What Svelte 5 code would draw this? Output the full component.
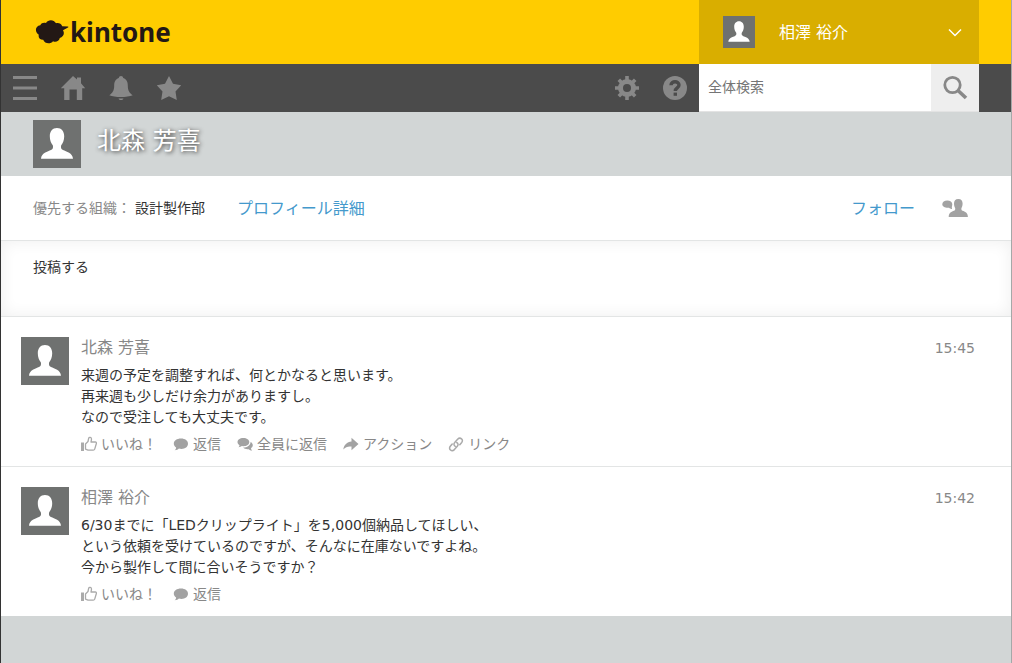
<script>
    let search = "";
    let message = "";

    const posts = [
        {
            name: "北森 芳喜",
            time: "15:45",
            lines: [
                "来週の予定を調整すれば、何とかなると思います。",
                "再来週も少しだけ余力がありますし。",
                "なので受注しても大丈夫です。",
            ],
            actions: ["like", "reply", "replyAll", "action", "link"],
        },
        {
            name: "相澤 裕介",
            time: "15:42",
            lines: [
                "6/30までに「LEDクリップライト」を5,000個納品してほしい、",
                "という依頼を受けているのですが、そんなに在庫ないですよね。",
                "今から製作して間に合いそうですか？",
            ],
            actions: ["like", "reply"],
        },
    ];

    const labels = {
        like: "いいね！",
        reply: "返信",
        replyAll: "全員に返信",
        action: "アクション",
        link: "リンク",
    };
</script>

{#snippet avatar(size)}
    <svg class="avatar {size}" viewBox="0 0 48 48" aria-hidden="true">
        <rect width="48" height="48" fill="#6f7170" />
        <path
            d="M24 8c4.500 0 7.200 3.500 7.200 8.200 0 3.800-1.300 6.900-3 9.100-.6 2.400-.1 3.700 1.800 4.700 3.200 1.600 9.800 3 10 8.700H8c.2-5.700 6.800-7.100 10-8.700 1.900-1 2.400-2.300 1.800-4.700-1.700-2.200-3-5.300-3-9.100C16.800 11.500 19.500 8 24 8z"
            fill="#fff"
        />
    </svg>
{/snippet}

{#snippet actionIcon(type)}
    <svg class="action-icon" viewBox="0 0 16 16" aria-hidden="true">
        {#if type === "like"}
            <path d="M0 6.500h3V15H0z" fill="#aaa" />
            <path
                d="M4.500 8 7 5.500 7.700 2.200c.4-1.400 2.800-1 2.800.9L10 6h4.300c1 0 1.300.9 1 1.700l-1.600 5.400c-.2.700-.8 1-1.500 1H7l-2.500-1z"
                fill="none"
                stroke="#aaa"
                stroke-width="1.300"
                stroke-linejoin="round"
            />
        {:else if type === "reply"}
            <path
                d="M8 2.500c4.200 0 7 2.200 7 5.200s-2.800 5.200-6.500 5.200c-1 0-1.800-.1-2.600-.3-.9.900-2.300 1.600-4.200 1.700.9-.8 1.400-1.700 1.400-2.900C1.700 10.500.8 9.200.8 7.700c0-3 3-5.200 7.200-5.200z"
                fill="#a2a2a2"
            />
        {:else if type === "replyAll"}
            <path
                d="M6.300 2c3.500 0 6 1.700 6 4.100s-2.500 4.200-5.700 4.200l-1.900-.2c-.7.700-1.800 1.100-3.300 1.200.7-.6 1-1.200 1.100-2.100C1.200 8.400.5 7.400.5 6.100.5 3.700 2.800 2 6.300 2z"
                fill="#a2a2a2"
            />
            <path
                d="M13.600 6c1.400.7 2.200 1.900 2.200 3.300 0 1.200-.7 2.200-1.800 3 0 .9.400 1.600 1.200 2.200-1.500 0-2.700-.5-3.500-1.300-2.400.3-4.500-.3-5.500-1.600 4-.2 7.200-2 7.400-5.600z"
                fill="#a2a2a2"
            />
        {:else if type === "action"}
            <path
                d="M8.500 1.800 15.500 8l-7 6.200v-3.600c-3.300-.5-6 .4-8.200 2.900C1 8.800 4 6 8.500 5.500z"
                fill="#a2a2a2"
            />
        {:else}
            <g fill="none" stroke="#aaa" stroke-width="1.500" stroke-linecap="round">
                <path d="M7.300 10.300c-1.500-.8-1.800-2.500-.6-3.800l2.900-3.300c2.700-2.600 6.400.5 4.100 3.300l-1.900 2.200" />
                <path d="M8.700 6.500c1.500.8 1.800 2.500.6 3.800l-2.900 3.300c-2.700 2.600-6.400-.5-4.100-3.300l1.900-2.200" />
            </g>
        {/if}
    </svg>
{/snippet}

<div class="page">
    <header class="header">
        <a class="logo" href="#top">
            <svg width="34" height="26" viewBox="0 0 34 26" aria-hidden="true">
                <path
                    d="M5.300 6.200C6.500 3.600 9 3.300 11 4c2-3.500 7.500-4 10 .2 2.800-.7 5.300.6 6.200 3l5.800.3c.5.300.5.800 0 1l-5 2.700c2 3.300.3 7-3.200 7.800-.8 3.300-4 4.600-6.800 3.300-2.300 3-8.300 2.800-9.800-1.500-3.200.2-5.200-2.300-4.400-5C-.3 13.300-.2 7 5.300 6.200z"
                    fill="#231815"
                />
            </svg>
            <span>kintone</span>
        </a>
        <button class="user" type="button">
            {@render avatar("small")}
            <span class="user-name">相澤 裕介</span>
            <svg width="14" height="9" viewBox="0 0 14 9" aria-hidden="true">
                <path d="M1 1.500 7 7.500l6-6" fill="none" stroke="#fff" stroke-width="1.500" />
            </svg>
        </button>
    </header>

    <nav class="toolbar">
        <div class="tools">
            <button type="button" aria-label="メニュー">
                <svg viewBox="0 0 26 26"><path d="M1 2.500h24M1 13h24M1 23.500h24" stroke="#888" stroke-width="3" /></svg>
            </button>
            <button type="button" aria-label="ポータル">
                <svg viewBox="0 0 26 26">
                    <path d="M13 1l4 3.600V2.500h4v5.800l4.200 4.900h-3V25h-5.400V14.500H9.500V25H4.200V13.200h-3.400z" fill="#888" />
                </svg>
            </button>
            <button type="button" aria-label="通知">
                <svg viewBox="0 0 26 26">
                    <path
                        d="M10.800 3c0-2.700 4.400-2.700 4.400 0 3.500 1.200 4.600 4 4.600 7.500 0 5.500 1.900 7.500 4.900 9.800-5.500 2.400-18 2.400-23.400 0 3-2.300 4.900-4.300 4.900-9.800 0-3.500 1.100-6.300 4.600-7.500zM10.500 23.400h5c-.8 2-4.200 2-5 0z"
                        fill="#888"
                    />
                </svg>
            </button>
            <button type="button" aria-label="ブックマーク">
                <svg viewBox="0 0 26 26">
                    <path d="M13 1l4 7.800 8.200 1.400-5.700 6.200 1.300 8.600L13 21.200 5.200 25l1.300-8.600L.8 10.200 9 8.800z" fill="#888" />
                </svg>
            </button>
        </div>
        <div class="tools">
            <button type="button" aria-label="設定">
                <svg viewBox="0 0 26 26">
                    <g stroke="#888" stroke-width="3.600">
                        <path d="M13 1v24M1 13h24M4.800 4.800l16.400 16.400M21.200 4.800 4.800 21.200" />
                    </g>
                    <circle cx="13" cy="13" r="9" fill="#888" />
                    <circle cx="13" cy="13" r="4" fill="#4b4b4b" />
                </svg>
            </button>
            <button type="button" aria-label="ヘルプ">
                <svg viewBox="0 0 26 26">
                    <circle cx="13" cy="13" r="12" fill="#888" />
                    <path
                        d="M9 10.200C9 5.600 17 5.600 17 10c0 3-3.700 2.900-3.700 6"
                        fill="none"
                        stroke="#4b4b4b"
                        stroke-width="3.400"
                    />
                    <path d="M11.600 17.600h3.400v3.200h-3.400z" fill="#4b4b4b" />
                </svg>
            </button>
        </div>
        <form class="search" on:submit|preventDefault>
            <input type="text" bind:value={search} placeholder="全体検索" aria-label="全体検索" />
            <button type="submit" aria-label="検索">
                <svg viewBox="0 0 26 26">
                    <circle cx="10.500" cy="10" r="7.700" fill="none" stroke="#888" stroke-width="2.800" />
                    <path d="M16 15.500l8 7.500" stroke="#888" stroke-width="3.600" />
                </svg>
            </button>
        </form>
    </nav>

    <div class="cover">
        {@render avatar("large")}
        <h1>北森 芳喜</h1>
    </div>

    <div class="profile">
        <span class="org-label">優先する組織：</span>
        <span class="org">設計製作部</span>
        <a href="#profile">プロフィール詳細</a>
        <a class="follow" href="#follow">フォロー</a>
        <button class="mention" type="button" aria-label="メンション">
            <svg width="26" height="20" viewBox="0 0 26 20">
                <path
                    d="M5.300 2.500c2.900 0 5 1.500 5 3.700 0 1.500-.8 2.600-.3 4.800-1.300-.1-2.300-.7-3-1.300C3 10 .3 8.500.3 6.200c0-2.200 2.100-3.700 5-3.700z"
                    fill="#a2a2a2"
                />
                <path
                    d="M16.300 1c3 0 4.300 1.800 4.300 4.500 0 2-.6 3.500-1.200 4.700-.2 1.400.2 2.100 1.200 2.500 2.200.9 5.300 1.800 5.300 6.300H6.700c0-4.500 3.100-5.400 5.300-6.300 1-.4 1.400-1.100 1.200-2.500-.6-1.200-1.200-2.700-1.200-4.700C12 2.800 13.300 1 16.300 1z"
                    fill="#a2a2a2"
                />
            </svg>
        </button>
    </div>

    <div class="compose">
        <textarea bind:value={message} placeholder="投稿する" aria-label="投稿する"></textarea>
    </div>

    <main>
        {#each posts as post}
            <article class="post">
                {@render avatar("large")}
                <div class="post-content">
                    <div class="post-head">
                        <a href="#user">{post.name}</a>
                        <time>{post.time}</time>
                    </div>
                    <div class="post-body">
                        {#each post.lines as line}
                            <p>{line}</p>
                        {/each}
                    </div>
                    <div class="actions">
                        {#each post.actions as type}
                            <button type="button">
                                {@render actionIcon(type)}
                                <span>{labels[type]}</span>
                            </button>
                        {/each}
                    </div>
                </div>
            </article>
        {/each}
    </main>
</div>

<style>
    :global(body) {
        background: #d2d6d6;
    }
    .page {
        min-height: 100vh;
        box-sizing: border-box;
        border-left: 1px solid #333;
        border-right: 1px solid #a5a8a8;
        background: #d2d6d6;
        color: #333;
        font-family: "DejaVu Sans", "Noto Sans CJK JP", sans-serif;
        font-size: 14px;
        line-height: 21px;
    }
    button,
    input,
    textarea {
        font: inherit;
        color: inherit;
        border: none;
        padding: 0;
        margin: 0;
        background: none;
        border-radius: 0;
    }
    button {
        cursor: pointer;
    }
    a {
        color: #4499cc;
        text-decoration: none;
    }
    svg {
        display: block;
        flex: none;
    }
    .avatar.large {
        width: 48px;
        height: 48px;
    }
    .avatar.small {
        width: 32px;
        height: 32px;
    }
    .header {
        display: flex;
        justify-content: space-between;
        height: 64px;
        padding-right: 32px;
        background: #ffcc00;
    }
    .logo {
        display: flex;
        align-items: center;
        gap: 1px;
        padding-left: 34px;
        color: #231815;
        font-family: "Noto Sans", sans-serif;
        font-size: 26px;
        font-weight: 700;
    }
    .user {
        display: flex;
        align-items: center;
        width: 280px;
        padding: 0 17px 0 24px;
        background: #d9ae00;
        color: #fff;
        font-size: 16px;
    }
    .user-name {
        flex: 1;
        margin-left: 24px;
        text-align: left;
    }
    .toolbar {
        display: flex;
        height: 48px;
        padding-right: 32px;
        background: #4b4b4b;
    }
    .tools {
        display: flex;
    }
    .tools:first-child {
        flex: 1;
    }
    .tools button,
    .search button {
        display: flex;
        align-items: center;
        justify-content: center;
        width: 48px;
    }
    .tools svg,
    .search svg {
        width: 26px;
        height: 26px;
    }
    .search {
        display: flex;
        width: 280px;
        box-sizing: border-box;
        border-bottom: 1px solid #e3e3e3;
        background: #fff;
    }
    .search input {
        flex: 1;
        min-width: 0;
        padding: 0 9px;
    }
    .search input::placeholder {
        color: #757575;
    }
    .search button {
        background: #eee;
    }
    .cover {
        display: flex;
        align-items: center;
        gap: 16px;
        height: 64px;
        padding: 0 32px;
    }
    h1 {
        margin: 0 0 6px;
        color: #fff;
        font-size: 24px;
        font-weight: 400;
        line-height: 32px;
        text-shadow: 1px 1px 4px #333;
    }
    .profile {
        display: flex;
        align-items: center;
        height: 64px;
        padding: 0 43px 0 32px;
        background: #fff;
        border-bottom: 1px solid #e3e5e5;
    }
    .profile a {
        font-size: 16px;
    }
    .org-label {
        color: #888;
    }
    .org {
        margin: 0 32px 0 4px;
    }
    .profile .follow {
        margin-left: auto;
        margin-right: 27px;
    }
    .compose {
        background: #fff;
        border-bottom: 1px solid #e3e5e5;
        box-shadow: inset 0 0 16px #eee;
    }
    .compose textarea {
        display: block;
        width: 100%;
        height: 75px;
        box-sizing: border-box;
        padding: 16px 32px;
        resize: none;
    }
    .compose textarea::placeholder {
        color: #333;
    }
    .post {
        display: flex;
        gap: 12px;
        padding: 20px 36px 12px 20px;
        background: #fff;
    }
    .post + .post {
        border-top: 1px solid #e3e5e5;
    }
    .post-content {
        flex: 1;
    }
    .post-head {
        display: flex;
        justify-content: space-between;
        line-height: 22px;
    }
    .post-head a {
        color: #888;
        font-size: 16px;
    }
    .post-head time {
        color: #888;
    }
    .post-body {
        margin: 6px 0;
    }
    .post-body p {
        margin: 0;
    }
    .actions {
        display: flex;
        gap: 16px;
        color: #888;
    }
    .actions button {
        display: flex;
        align-items: center;
        gap: 4px;
        line-height: 20px;
    }
    .action-icon {
        width: 16px;
        height: 16px;
    }
</style>
